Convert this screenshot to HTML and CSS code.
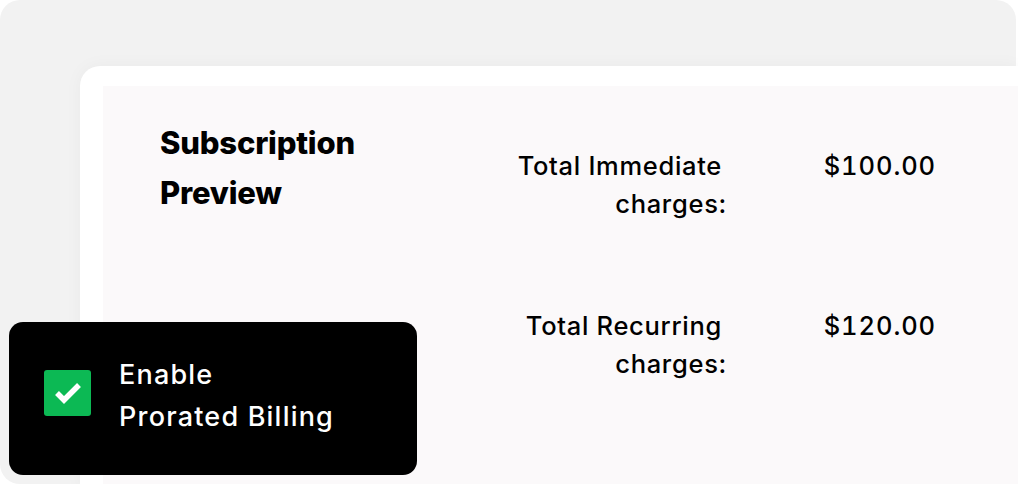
FILE: index.html
```html
<!DOCTYPE html>
<html lang="en">
<head>
  <meta charset="UTF-8">
  <meta name="viewport" content="width=device-width, initial-scale=1.0">
  <title>Subscription Preview</title>
  <link rel="stylesheet" href="styles.css">
</head>
<body>
  <div class="frame">
    <div class="card">
      <div class="panel">
        <h2 class="title">Subscription<br>Preview</h2>
        <div class="charges">
          <div class="charge-row">
            <div class="label"><span class="first-line">Total Immediate</span><br>charges:</div>
            <div class="amount">$100.00</div>
          </div>
          <div class="charge-row">
            <div class="label"><span class="first-line">Total Recurring</span><br>charges:</div>
            <div class="amount">$120.00</div>
          </div>
        </div>
      </div>
    </div>

    <!-- Prorated billing toggle, sits over the card -->
    <div class="toggle-box">
      <span class="checkbox">
        <svg width="28" height="22" viewBox="0 0 28 22">
          <path d="M3 11 L10 18 L25 3" fill="none" stroke="#fff" stroke-width="5.5"/>
        </svg>
      </span>
      <span class="toggle-text">Enable<br>Prorated Billing</span>
    </div>
  </div>
</body>
</html>
```

FILE: styles.css
```css
body {
  margin: 0;
  font-family: Inter, "Noto Sans", sans-serif;
  background-color: #fff;
  overflow: hidden;
}

.frame {
  position: relative;
  width: 1016px;
  height: 484px;
  background-color: #f2f2f2;
  border-radius: 20px;
  padding: 66px 0 0 80px;
  box-sizing: border-box;
}

.card {
  width: 938px;
  height: 420px;
  background-color: #fff;
  border-radius: 20px 0 0 0;
  padding: 20px 0 0 23px;
  box-sizing: border-box;
  box-shadow: 0 0 18px rgba(0, 0, 0, 0.04);
}

.panel {
  display: flex;
  height: 100%;
  background-color: #fbf9fa;
  padding: 32px 0 0 57px;
  box-sizing: border-box;
}

.title {
  width: 317px;
  margin: 0;
  font-size: 31px;
  font-weight: 800;
  line-height: 50px;
  color: #000;
  letter-spacing: -0.2px;
}

.charges {
  padding-top: 29px;
  display: flex;
  flex-direction: column;
  gap: 84px;
}

.charge-row {
  display: grid;
  grid-template-columns: 250px 209px;
  font-size: 25.5px;
  line-height: 38px;
  font-weight: 500;
  color: #000;
  letter-spacing: 0.7px;
}

.label {
  text-align: right;
}

.label .first-line {
  margin-right: 5px;
}

.amount {
  text-align: right;
  font-feature-settings: "tnum";
  letter-spacing: 0.9px;
}

.toggle-box {
  position: absolute;
  left: 9px;
  top: 322px;
  width: 408px;
  height: 153px;
  background-color: #000;
  border-radius: 14px;
  display: flex;
  align-items: center;
  gap: 28px;
  padding: 0 0 5px 35px;
  box-sizing: border-box;
}

.checkbox {
  width: 47px;
  height: 46px;
  background-color: #0cb954;
  border-radius: 3px;
  display: flex;
  align-items: center;
  justify-content: center;
  margin-bottom: 6px;
}

.toggle-text {
  color: #fff;
  font-size: 27px;
  line-height: 42px;
  font-weight: 500;
  letter-spacing: 1.2px;
}
```
